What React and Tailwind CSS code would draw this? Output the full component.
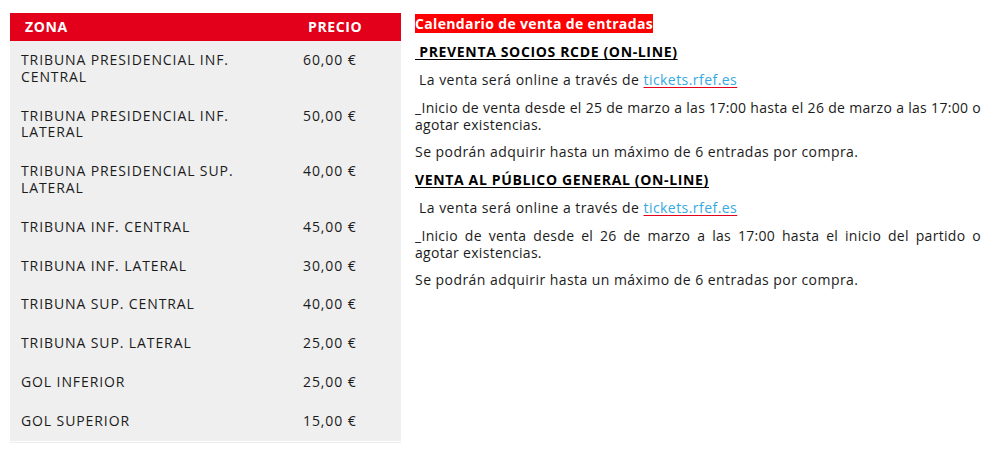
import React from 'react';

const zonas = [
  { zona: 'TRIBUNA PRESIDENCIAL INF. CENTRAL', precio: '60,00 €' },
  { zona: 'TRIBUNA PRESIDENCIAL INF. LATERAL', precio: '50,00 €' },
  { zona: 'TRIBUNA PRESIDENCIAL SUP. LATERAL', precio: '40,00 €' },
  { zona: 'TRIBUNA INF. CENTRAL', precio: '45,00 €' },
  { zona: 'TRIBUNA INF. LATERAL', precio: '30,00 €' },
  { zona: 'TRIBUNA SUP. CENTRAL', precio: '40,00 €' },
  { zona: 'TRIBUNA SUP. LATERAL', precio: '25,00 €' },
  { zona: 'GOL INFERIOR', precio: '25,00 €' },
  { zona: 'GOL SUPERIOR', precio: '15,00 €' },
];

// Bloque de venta (preventa / publico general)
function Venta({ titulo, inicio }) {
  return (
    <>
      <p className="mb-[11px] font-bold text-black underline underline-offset-2 tracking-[0.65px]">{titulo}</p>
      <p className="mb-[11px]">
        &nbsp;La venta será online a través de{' '}
        <a href="#" className="text-[#36a9e1] underline decoration-[#e2001a] underline-offset-2">
          tickets.rfef.es
        </a>
      </p>
      <p className="mb-[11px] text-justify tracking-[0.3px]">{inicio}</p>
      <p className="mb-[11px]">Se podrán adquirir hasta un máximo de 6 entradas por compra.</p>
    </>
  );
}

export default function App() {
  return (
    <div className="flex w-[1006px] h-[452px] gap-[14px] bg-white pl-[10px] pt-[13px] font-['Open_Sans',sans-serif] text-[14px] leading-[16.8px] text-[#1b1b1b]">
      <div className="w-[391px] shrink-0">
        <table className="w-full border-collapse">
          <thead>
            <tr className="bg-[#e2001a] text-white font-bold h-[28px] tracking-[0.6px]">
              <th className="w-[282px] pl-[15px] text-left">ZONA</th>
              <th className="pl-[16px] text-left">PRECIO</th>
            </tr>
          </thead>
          <tbody className="bg-[#efefef] tracking-[0.9px]">
            {zonas.map((z) => (
              <tr key={z.zona}>
                <td className="pl-[11px] pr-[40px] py-[11px] align-top">{z.zona}</td>
                <td className="pl-[11px] py-[11px] align-top">{z.precio}</td>
              </tr>
            ))}
          </tbody>
        </table>
        <div className="mt-px h-px bg-[#ececec]" />
      </div>
      <div className="w-[566px] pt-[3px] tracking-[0.45px]">
        <p className="mb-[11.5px]">
          <span className="bg-[#ff0000] font-bold text-white tracking-[0.35px]">Calendario de venta de entradas</span>
        </p>
        <Venta
          titulo={'\u00a0PREVENTA SOCIOS RCDE (ON-LINE)'}
          inicio="_Inicio de venta desde el 25 de marzo a las 17:00 hasta el 26 de marzo a las 17:00 o agotar existencias."
        />
        <Venta
          titulo="VENTA AL PÚBLICO GENERAL (ON-LINE)"
          inicio="_Inicio de venta desde el 26 de marzo a las 17:00 hasta el inicio del partido o agotar existencias."
        />
      </div>
    </div>
  );
}
